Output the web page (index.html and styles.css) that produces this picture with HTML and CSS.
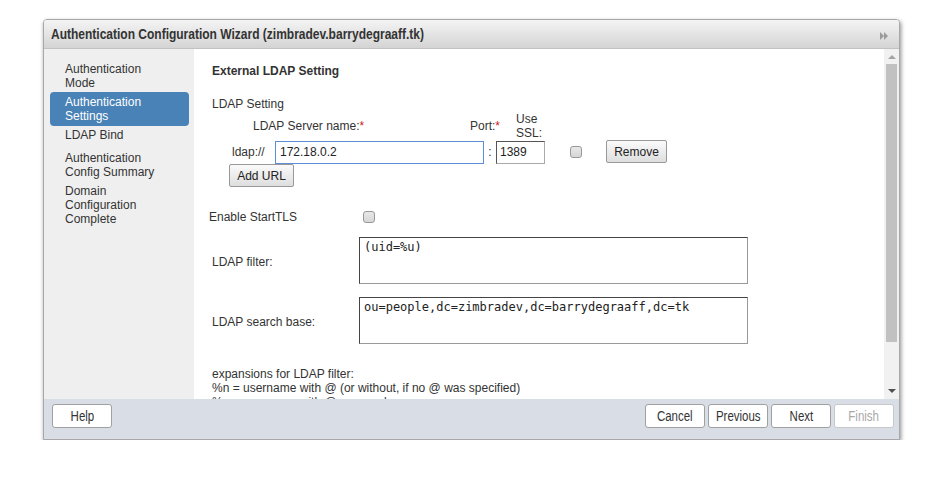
FILE: index.html
```html
<!DOCTYPE html>
<html>
<head>
<meta charset="utf-8">
<link rel="stylesheet" href="styles.css">
</head>
<body>
<div class="dialog">
  <div class="titlebar">
    <div class="title-wrap"><span class="title">Authentication Configuration Wizard (zimbradev.barrydegraaff.tk)</span></div>
    <svg class="collapse" width="10" height="8" viewBox="0 0 10 8"><path d="M1 0 L5 4 L1 8 Z M5 0 L9 4 L5 8 Z" fill="#9a9a9a"/></svg>
  </div>
  <div class="main">
    <div class="sidebar">
      <div class="step step-a">Authentication<br>Mode</div>
      <div class="step selected">Authentication<br>Settings</div>
      <div class="step step-c">LDAP Bind</div>
      <div class="step step-d">Authentication<br>Config Summary</div>
      <div class="step">Domain<br>Configuration<br>Complete</div>
    </div>
    <div class="content">
      <div class="section-title">External LDAP Setting</div>
      <div class="subtitle">LDAP Setting</div>
      <div class="url-head">
        <span class="h-server">LDAP Server name:<span class="req">*</span></span>
        <span class="h-port">Port:<span class="req">*</span></span>
        <span class="h-ssl">Use<br>SSL:</span>
      </div>
      <div class="url-row">
        <span class="prefix">ldap://</span>
        <input class="txt server" type="text" value="172.18.0.2">
        <span class="colon">:</span>
        <input class="txt port" type="text" value="1389">
        <span class="ssl-cell"><input class="chk" type="checkbox"></span>
        <button class="btn">Remove</button>
      </div>
      <div class="add-row"><button class="btn">Add URL</button></div>
      <div class="tls-row">
        <span class="tls-label">Enable StartTLS</span>
        <input class="chk" type="checkbox">
      </div>
      <div class="area-row first">
        <span class="area-label">LDAP filter:</span>
        <textarea class="area">(uid=%u)</textarea>
      </div>
      <div class="area-row">
        <span class="area-label">LDAP search base:</span>
        <textarea class="area">ou=people,dc=zimbradev,dc=barrydegraaff,dc=tk</textarea>
      </div>
      <div class="help-text">expansions for LDAP filter:<br>%n = username with @ (or without, if no @ was specified)<br>%u = username with @ removed</div>
    </div>
    <div class="scrollbar">
      <div class="arrow up"></div>
      <div class="track"><div class="thumb"></div></div>
      <div class="arrow down"></div>
    </div>
  </div>
  <div class="footer">
    <button class="fbtn"><span class="narrow">Help</span></button>
    <div class="spacer"></div>
    <button class="fbtn"><span class="narrow">Cancel</span></button>
    <button class="fbtn"><span class="narrow">Previous</span></button>
    <button class="fbtn"><span class="narrow">Next</span></button>
    <button class="fbtn" disabled><span class="narrow">Finish</span></button>
  </div>
</div>
</body>
</html>
```

FILE: styles.css
```css
html, body {
  margin: 0;
  padding: 0;
  background: #ffffff;
}
body {
  padding: 19px 0 0 43px;
  font-family: "Liberation Sans", Arial, sans-serif;
  font-size: 12px;
  color: #333;
}
.dialog {
  width: 855px;
  height: 419px;
  border: 1px solid #a8a8a8;
  border-radius: 4px 4px 0 0;
  box-shadow: 1px 2px 4px rgba(0,0,0,0.45);
  display: flex;
  flex-direction: column;
  overflow: hidden;
  background: #fff;
}
.titlebar {
  height: 28px;
  flex: none;
  display: flex;
  align-items: center;
  padding: 0 10px 0 7px;
  background: linear-gradient(#f4f4f4, #d4d4d4);
  border-bottom: 1px solid #c2c2c2;
}
.title-wrap {
  flex: 1;
  overflow: hidden;
  white-space: nowrap;
}
.title {
  display: inline-block;
  font-weight: bold;
  font-size: 14px;
  color: #333;
  transform: scaleX(0.857);
  transform-origin: left center;
}
.collapse {
  margin-top: 4px;
}
.main {
  height: 350px;
  display: flex;
  flex: none;
}
.sidebar {
  width: 150px;
  flex: none;
  background: #efefef;
  padding: 13px 0 0 6px;
  box-sizing: border-box;
  color: #333;
  line-height: 14px;
}
.step {
  padding: 0 0 0 15px;
  width: 139px;
  box-sizing: border-box;
}
.step-a { margin-bottom: 2px; }
.selected {
  background: #4882b6;
  color: #fff;
  border-radius: 4px;
  padding-top: 3px;
  padding-bottom: 3px;
}
.step-c { margin-top: 2px; margin-bottom: 9px; }
.step-d { margin-bottom: 5px; }
.content {
  flex: 1;
  background: #fff;
  padding: 15px 0 0 18px;
  overflow: hidden;
  line-height: 14px;
  color: #333;
}
.section-title {
  font-weight: bold;
  height: 14px;
}
.subtitle {
  margin-top: 19px;
  height: 14px;
}
.url-head {
  display: flex;
  height: 29px;
  align-items: flex-end;
}
.h-server { margin-left: 41px; width: 217px; padding-bottom: 7px; }
.h-port { width: 46px; padding-bottom: 7px; }
.h-ssl { width: 30px; }
.req { color: #d02020; }
.url-row {
  display: flex;
  align-items: center;
  height: 24px;
}
.prefix {
  margin-left: 20px;
  width: 43px;
}
.txt {
  height: 23px;
  box-sizing: border-box;
  border: 1px solid #777;
  font-family: "Liberation Sans", Arial, sans-serif;
  font-size: 12px;
  color: #222;
  padding: 0 4px;
  margin: 0;
  outline: none;
}
.server {
  width: 209px;
  border-color: #5a8fd8;
}
.port {
  width: 49px;
  border-color: #555 #aaa #aaa #555;
  padding-left: 3px;
}
.colon {
  width: 12px;
  text-align: center;
}
.ssl-cell {
  width: 61px;
  display: flex;
}
.chk {
  appearance: none;
  -webkit-appearance: none;
  width: 12px;
  height: 12px;
  border: 1px solid #999;
  border-radius: 3px;
  background: linear-gradient(#e8e8e8, #d6d6d6);
  margin: 0;
  box-sizing: border-box;
}
.ssl-cell .chk { margin-left: 25px; }
.btn {
  height: 23px;
  box-sizing: border-box;
  border: 1px solid #999;
  border-radius: 2px;
  background: linear-gradient(#fafafa, #dedede);
  font-family: "Liberation Sans", Arial, sans-serif;
  font-size: 12px;
  color: #222;
  padding: 0 7px;
  margin: 0;
}
.url-row .btn { width: 61px; margin-top: -1px; }
.add-row {
  margin-left: 17px;
  height: 24px;
}
.add-row .btn { width: 65px; }
.tls-row {
  display: flex;
  align-items: center;
  margin-top: 22px;
  margin-left: -3px;
  height: 14px;
}
.tls-label { width: 154px; }
.area-row {
  display: flex;
  align-items: center;
  margin-top: 13px;
  height: 47px;
}
.area-label {
  width: 147px;
  padding-top: 2px;
}
.area {
  width: 389px;
  height: 47px;
  box-sizing: border-box;
  border: 1px solid #666;
  border-color: #444 #999 #999 #444;
  font-family: "DejaVu Sans Mono", monospace;
  font-size: 12px;
  line-height: 14px;
  padding: 2px 4px 1px;
  margin: 0;
  resize: none;
  color: #222;
  overflow: hidden;
}
.help-text {
  margin-top: 23px;
  line-height: 14px;
}
.scrollbar {
  width: 15px;
  flex: none;
  background: #f1f1f1;
  display: flex;
  flex-direction: column;
  align-items: center;
}
.arrow {
  width: 0;
  height: 0;
  border-left: 4px solid transparent;
  border-right: 4px solid transparent;
  flex: none;
}
.arrow.up {
  border-bottom: 4px solid #a3a3a3;
  margin-top: 6px;
}
.arrow.down {
  border-top: 4px solid #505050;
  margin-bottom: 6px;
}
.track {
  flex: 1;
  width: 100%;
  padding: 5px 2px 0 2px;
  box-sizing: border-box;
}
.thumb {
  height: 278px;
  background: #c1c1c1;
}
.footer {
  flex: 1;
  background: #d9dee6;
  display: flex;
  align-items: flex-start;
  padding: 5px 5px 0 8px;
  gap: 3px;
}
.spacer { flex: 1; }
.fbtn {
  width: 60px;
  height: 24px;
  box-sizing: border-box;
  background: #fff;
  border: 1px solid #a0a0a0;
  border-radius: 3px;
  font-family: "Liberation Sans", Arial, sans-serif;
  font-size: 14px;
  color: #333;
  padding: 0;
  margin: 0;
  display: flex;
  align-items: center;
  justify-content: center;
  overflow: hidden;
}
.narrow {
  display: inline-block;
  transform: scaleX(0.82);
  white-space: nowrap;
}
.fbtn:disabled {
  color: #a8a8a8;
  border-color: #c8c8c8;
}
```
